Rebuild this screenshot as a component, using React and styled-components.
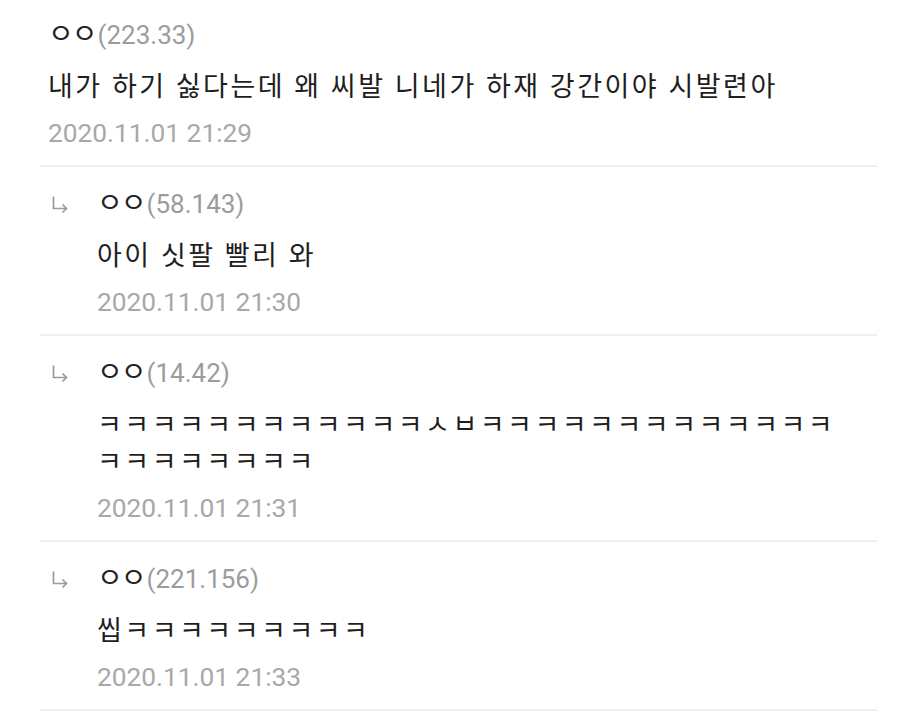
import React from 'react';
import styled, { createGlobalStyle } from 'styled-components';

const GlobalStyle = createGlobalStyle`
  body {
    margin: 0;
    background: #ffffff;
    font-family: Roboto, "Noto Sans CJK KR", sans-serif;
  }
`;

const List = styled.div`
  width: 837px;
  margin-left: 40px;
`;

const Item = styled.div`
  display: flex;
  padding: 17px 0 14px 8px;
  border-bottom: 2px solid #efefef;

  &:first-child {
    padding-top: 15px;
  }
`;

const Arrow = styled.div`
  width: 49px;
  flex-shrink: 0;
  height: 40px;
  display: flex;
  align-items: center;
  padding-left: 3px;
  box-sizing: border-box;
`;

const Body = styled.div`
  flex: 1;
  min-width: 0;
`;

const Name = styled.div`
  height: 40px;
  line-height: 40px;
  font-size: 26px;
  color: #222222;
`;

const Nick = styled.span`
  font-size: 28px;
  letter-spacing: -2px;
  margin-right: 2px;
`;

const Score = styled.span`
  color: #9c9c9c;
`;

const Text = styled.div`
  margin-top: 14px;
  font-size: 27px;
  letter-spacing: 2.5px;
  line-height: 37px;
  color: #1e1e1e;
  word-break: break-all;
`;

const Date = styled.div`
  margin-top: 9px;
  font-size: 26.3px;
  line-height: 36px;
  color: #a8a8a8;
`;

const ReplyIcon = () => (
  <svg width="18" height="19" viewBox="0 0 18 19" fill="none" stroke="#9a9a9a" strokeWidth="1.7">
    <path d="M2.5 1.5 V13.5 H15.5" />
    <path d="M11.5 9.5 L15.5 13.5 L11.5 17.5" />
  </svg>
);

const comments = [
  { reply: false, score: '223.33', text: '내가 하기 싫다는데 왜 씨발 니네가 하재 강간이야 시발련아', date: '2020.11.01 21:29' },
  { reply: true, score: '58.143', text: '아이 싯팔 빨리 와', date: '2020.11.01 21:30' },
  {
    reply: true,
    score: '14.42',
    text: ['ㅋㅋㅋㅋㅋㅋㅋㅋㅋㅋㅋㅋㅅㅂㅋㅋㅋㅋㅋㅋㅋㅋㅋㅋㅋㅋㅋ', 'ㅋㅋㅋㅋㅋㅋㅋㅋ'],
    date: '2020.11.01 21:31',
  },
  { reply: true, score: '221.156', text: '씹ㅋㅋㅋㅋㅋㅋㅋㅋㅋ', date: '2020.11.01 21:33' },
];

const Comment = ({ reply, score, text, date }) => (
  <Item>
    {reply && (
      <Arrow>
        <ReplyIcon />
      </Arrow>
    )}
    <Body>
      <Name>
        <Nick>ㅇㅇ</Nick>
        <Score>({score})</Score>
      </Name>
      <Text>
        {Array.isArray(text)
          ? text.map((line, i) => <div key={i}>{line}</div>)
          : text}
      </Text>
      <Date>{date}</Date>
    </Body>
  </Item>
);

export default function App() {
  return (
    <>
      <GlobalStyle />
      <List>
        {comments.map((c, i) => (
          <Comment key={i} {...c} />
        ))}
      </List>
    </>
  );
}
